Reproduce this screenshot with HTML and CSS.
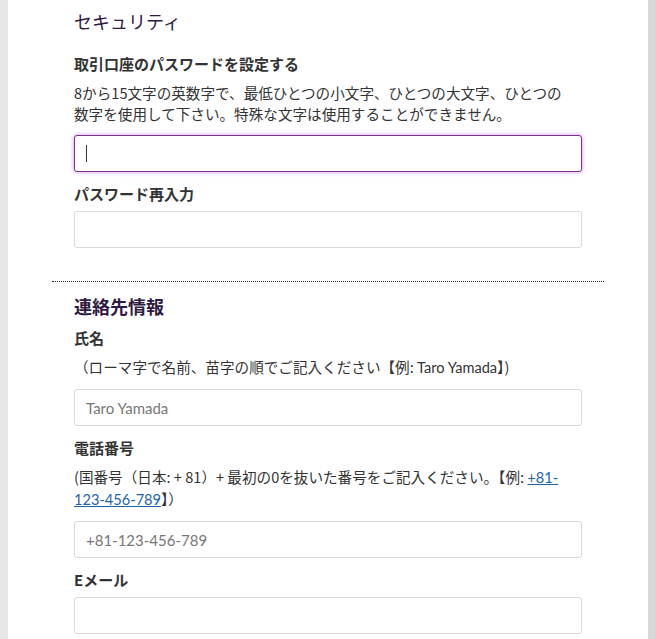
FILE: index.html
```html
<!DOCTYPE html>
<html lang="ja">
<head>
<meta charset="utf-8">
<link rel="stylesheet" href="styles.css">
</head>
<body>
<div class="page">
  <div class="gutter-left"></div>
  <main class="panel">
    <section class="section first">
      <h2 class="heading">セキュリティ</h2>
      <div class="field field-top">
        <label class="label">取引口座のパスワードを設定する</label>
        <p class="desc">8から15文字の英数字で、最低ひとつの小文字、ひとつの大文字、ひとつの<br>数字を使用して下さい。特殊な文字は使用することができません。</p>
        <div class="input focused"><span class="caret"></span></div>
      </div>
      <div class="field">
        <label class="label">パスワード再入力</label>
        <div class="input"></div>
      </div>
    </section>
    <hr class="sep">
    <section class="section">
      <h2 class="heading bold">連絡先情報</h2>
      <div class="field field-top2">
        <label class="label">氏名</label>
        <p class="desc">（ローマ字で名前、苗字の順でご記入ください【例: <span class="latin">Taro Yamada</span>】)</p>
        <div class="input"><span class="ph">Taro Yamada</span></div>
      </div>
      <div class="field">
        <label class="label">電話番号</label>
        <p class="desc">(国番号（日本: + 81）+ 最初の0を抜いた番号をご記入ください。【例: <a class="link" href="#">+81-<br>123-456-789</a>】）</p>
        <div class="input"><span class="ph">+81-123-456-789</span></div>
      </div>
      <div class="field">
        <label class="label">Eメール</label>
        <div class="input"></div>
      </div>
    </section>
  </main>
  <div class="gutter-right"></div>
</div>
</body>
</html>
```

FILE: styles.css
```css
html, body {
  margin: 0;
  padding: 0;
}
body {
  background: #e6e6e6;
  font-family: "Noto Sans CJK JP", "Noto Sans", sans-serif;
  color: #333;
}
.page {
  display: flex;
  height: 639px;
  overflow: hidden;
}
.gutter-left {
  width: 8px;
  flex: none;
  background: #e6e6e6;
}
.gutter-right {
  width: 7px;
  flex: none;
  background: #d8d8d8;
}
.panel {
  width: 640px;
  flex: none;
  background: #fff;
  padding: 9px 44px 0;
  box-sizing: border-box;
}
.section {
  padding: 0 22px;
}
.heading {
  margin: 0;
  font-size: 18px;
  line-height: 24px;
  font-weight: 400;
  color: #2e1a42;
}
.heading.bold {
  font-size: 18px;
  font-weight: 700;
}
.field {
  display: flex;
  flex-direction: column;
  margin-top: 10px;
}
.field-top {
  margin-top: 19px;
}
.field-top2 {
  margin-top: 8px;
}
.label {
  font-size: 15px;
  line-height: 24px;
  font-weight: 700;
  color: #333;
}
.desc {
  margin: 6px 0 0;
  font-size: 14.6px;
  line-height: 21px;
  color: #333;
}
.latin, .link {
  font-family: Lato, "Noto Sans", sans-serif;
}
.link {
  color: #1b63ad;
  text-decoration: underline;
}
.input {
  margin-top: 5px;
  height: 37px;
  box-sizing: border-box;
  border: 1px solid #d9d9d9;
  border-radius: 3px;
  background: #fff;
  display: flex;
  align-items: center;
  padding: 0 11px;
}
.desc + .input {
  margin-top: 11px;
}
.input.focused {
  border-color: #7d2f91;
  box-shadow: 0 0 4px rgba(160, 70, 190, 0.55);
}
.caret {
  display: block;
  width: 1px;
  height: 17px;
  background: #333;
}
.ph {
  font-family: Lato, "Noto Sans", sans-serif;
  font-size: 15px;
  color: #777;
}
.sep {
  margin: 33px 0 12px;
  border: 0;
  border-top: 1px dotted #222;
  height: 0;
}
```
